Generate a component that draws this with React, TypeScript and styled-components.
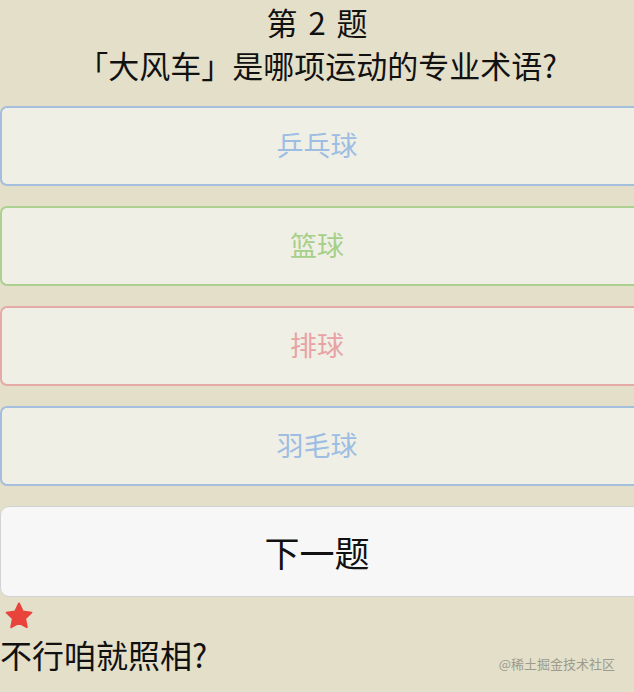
import React from "react";
import styled, { createGlobalStyle } from "styled-components";

const GlobalStyle = createGlobalStyle`
  html, body {
    margin: 0;
    padding: 0;
    background: #e3dfc9;
    overflow: hidden;
  }
  body {
    font-family: "Noto Sans CJK SC", "Noto Sans", "Liberation Sans", sans-serif;
    color: #111;
  }
`;

const Page = styled.div`
  position: relative;
  width: 634px;
  height: 692px;
  background: #e3dfc9;
  overflow: hidden;
`;

const Header = styled.div`
  text-align: center;
  font-size: 31px;
  line-height: 43px;
  color: #111;
  margin: 0 0 20px;
`;

const Number = styled.span`
  margin: 0 11px;
`;

const OptionList = styled.div`
  display: flex;
  flex-direction: column;
  gap: 20px;
  margin-right: -8px;
`;

const Option = styled.div<{ $tone: string; $text: string }>`
  box-sizing: border-box;
  height: 80px;
  display: flex;
  align-items: center;
  justify-content: center;
  padding: 0 8px 4px 0;
  background: #f0efe6;
  border: 2px solid ${(p) => p.$tone};
  border-radius: 7px;
  color: ${(p) => p.$text};
  font-size: 27px;
`;

const NextButton = styled.button`
  box-sizing: border-box;
  display: flex;
  align-items: center;
  justify-content: center;
  width: 642px;
  height: 91px;
  margin: 20px -8px 0 0;
  padding: 0 8px 0 0;
  background: #f7f7f8;
  border: 1px solid #cfd3d4;
  border-radius: 9px;
  font-family: inherit;
  font-size: 35px;
  color: #111;
`;

const StarWrap = styled.div`
  height: 32px;
  padding: 5px 0 0 4px;
`;

const Footnote = styled.div`
  font-size: 32px;
  line-height: 40px;
  color: #111;
`;

const Watermark = styled.span`
  position: absolute;
  right: 19px;
  bottom: 19px;
  font-size: 13px;
  color: #9c9b8c;
`;

const options = [
  { label: "乒乓球", tone: "#a4bedd", text: "#9dbde3" },
  { label: "篮球", tone: "#abd090", text: "#a6cf89" },
  { label: "排球", tone: "#e6aaa6", text: "#e7a3a3" },
  { label: "羽毛球", tone: "#a4bedd", text: "#9dbde3" },
];

const Star = () => (
  <svg width="30" height="28" viewBox="0 0 24 23">
    <path
      d="M12 1.2l3.1 6.6 7.1.9-5.2 4.9 1.4 7.1L12 17.2l-6.4 3.5 1.4-7.1L1.8 8.7l7.1-.9z"
      fill="#e8443b"
      stroke="#e8443b"
      strokeWidth="1.6"
      strokeLinejoin="round"
    />
  </svg>
);

export default function App() {
  return (
    <Page>
      <GlobalStyle />
      <Header>
        <div>
          第<Number>2</Number>题
        </div>
        <div>「大风车」是哪项运动的专业术语?</div>
      </Header>
      <OptionList>
        {options.map((o) => (
          <Option key={o.label} $tone={o.tone} $text={o.text}>
            {o.label}
          </Option>
        ))}
      </OptionList>
      <NextButton>下一题</NextButton>
      <StarWrap>
        <Star />
      </StarWrap>
      <Footnote>不行咱就照相?</Footnote>
      <Watermark>@稀土掘金技术社区</Watermark>
    </Page>
  );
}
